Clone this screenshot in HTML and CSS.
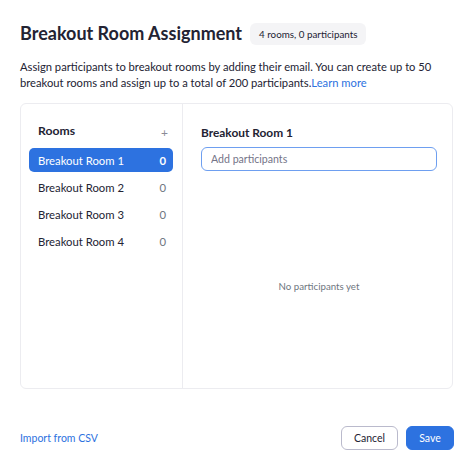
FILE: index.html
```html
<!DOCTYPE html>
<html>
<head>
<meta charset="utf-8">
<link rel="stylesheet" href="styles.css">
</head>
<body>
<div class="dialog">
  <div class="header">
    <h1 class="title">Breakout Room Assignment</h1>
    <span class="badge">4 rooms, 0 participants</span>
  </div>
  <p class="desc">Assign participants to breakout rooms by adding their email. You can create up to 50 breakout rooms and assign up to a total of 200 participants.<a class="link" href="#">Learn more</a></p>
  <div class="card">
    <div class="rooms">
      <div class="rooms-head">
        <span class="rooms-title">Rooms</span>
        <span class="plus">+</span>
      </div>
      <ul class="room-list">
        <li class="room selected"><span>Breakout Room 1</span><span class="count">0</span></li>
        <li class="room"><span>Breakout Room 2</span><span class="count">0</span></li>
        <li class="room"><span>Breakout Room 3</span><span class="count">0</span></li>
        <li class="room"><span>Breakout Room 4</span><span class="count">0</span></li>
      </ul>
    </div>
    <div class="detail">
      <div class="detail-title">Breakout Room 1</div>
      <input class="input" type="text" placeholder="Add participants">
      <div class="empty">No participants yet</div>
    </div>
  </div>
  <div class="footer">
    <a class="link import" href="#">Import from CSV</a>
    <div class="actions">
      <button class="btn cancel">Cancel</button>
      <button class="btn save">Save</button>
    </div>
  </div>
</div>
</body>
</html>
```
FILE: styles.css
```css
* { box-sizing: border-box; }
body {
  margin: 0;
  background: #fff;
  font-family: Lato, "Open Sans", sans-serif;
  color: #232333;
}
.dialog {
  padding: 19px 22px 0 20px;
  display: flex;
  flex-direction: column;
}
.header {
  display: flex;
  align-items: center;
  gap: 8px;
  height: 28px;
}
.title {
  margin: 0;
  font-size: 18px;
  font-weight: 700;
  line-height: 28px;
  color: #232333;
}
.badge {
  margin-top: 2px;
  background: #f4f4f6;
  border-radius: 6px;
  font-size: 9.8px;
  padding: 0 9px;
  height: 22px;
  line-height: 22px;
  color: #232333;
}
.desc {
  margin: 12px 0 0;
  font-size: 11.2px;
  line-height: 16px;
  color: #232333;
}
.link {
  color: #2d72e0;
  text-decoration: none;
}
.card {
  margin-top: 12px;
  height: 286px;
  border: 1px solid #ececf0;
  border-radius: 6px;
  display: flex;
}
.rooms {
  width: 162px;
  border-right: 1px solid #ececf0;
  padding: 17px 9px 0 8px;
}
.rooms-head {
  display: flex;
  justify-content: space-between;
  align-items: center;
  padding: 0 5px 0 9px;
  height: 18px;
}
.rooms-title {
  font-weight: 700;
  font-size: 12.2px;
}
.plus {
  color: #8a8a96;
  font-size: 12px;
  margin-top: 4px;
}
.room-list {
  list-style: none;
  margin: 9px 0 0;
  padding: 0;
}
.room {
  display: flex;
  justify-content: space-between;
  align-items: center;
  height: 24px;
  margin-bottom: 3px;
  padding: 0 7px 0 9px;
  border-radius: 5px;
  font-size: 11.3px;
  color: #232333;
}
.room .count { color: #6e7680; }
.room.selected {
  background: #2d72e0;
  color: #fff;
}
.room.selected .count { color: #fff; font-weight: 700; }
.detail {
  flex: 1;
  padding: 20px 15px 0 18px;
  display: flex;
  flex-direction: column;
}
.detail-title {
  font-weight: 700;
  font-size: 11.9px;
  line-height: 18px;
}
.input {
  margin-top: 5px;
  height: 24px;
  border: 1px solid #6e9ff0;
  border-radius: 6px;
  padding: 0 9px;
  font-family: inherit;
  font-size: 10.6px;
  color: #232333;
  outline: none;
}
.input::placeholder { color: #747487; }
.empty {
  margin-top: 108px;
  line-height: 14px;
  text-align: center;
  font-size: 9.7px;
  color: #6e7680;
}
.footer {
  margin-top: 37px;
  display: flex;
  justify-content: space-between;
  align-items: center;
  margin-right: -1px;
}
.import { font-size: 10.5px; }
.actions {
  display: flex;
  gap: 8px;
}
.btn {
  height: 24px;
  border-radius: 6px;
  font-family: inherit;
  font-size: 10.5px;
  padding: 0;
  cursor: pointer;
}
.cancel {
  background: #fff;
  border: 1px solid #babacc;
  color: #232333;
  width: 57px;
}
.save {
  background: #2d72e0;
  border: 1px solid #2d72e0;
  color: #fff;
  width: 48px;
}
```
